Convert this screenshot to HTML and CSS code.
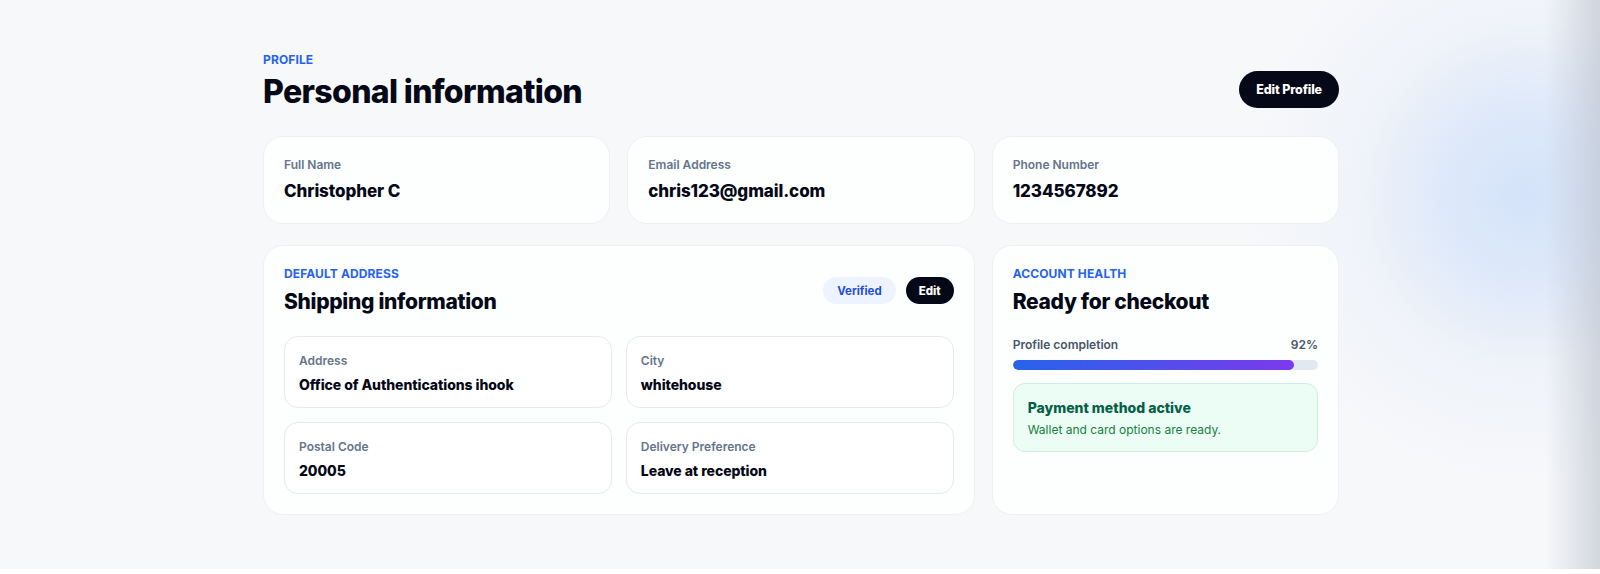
FILE: index.html
```html
<!DOCTYPE html>
<html lang="en">
<head>
  <meta charset="UTF-8">
  <meta name="viewport" content="width=device-width, initial-scale=1.0">
  <title>Profile</title>
  <link rel="stylesheet" href="styles.css">
</head>
<body>

  <div class="page">
    <div class="container">
      <div class="header">
        <div>
          <div class="eyebrow">PROFILE</div>
          <h1 class="title">Personal information</h1>
        </div>
        <button class="btn-dark btn-lg">Edit Profile</button>
      </div>

      <div class="grid">
        <div class="card info">
          <div class="label">Full Name</div>
          <div class="value">Christopher C</div>
        </div>
        <div class="card info">
          <div class="label">Email Address</div>
          <div class="value">chris123@gmail.com</div>
        </div>
        <div class="card info">
          <div class="label">Phone Number</div>
          <div class="value">1234567892</div>
        </div>

        <div class="card section wide">
          <div class="section-head">
            <div>
              <div class="eyebrow">DEFAULT ADDRESS</div>
              <h2 class="section-title">Shipping information</h2>
            </div>
            <div class="actions">
              <span class="pill">Verified</span>
              <button class="btn-dark btn-sm">Edit</button>
            </div>
          </div>
          <div class="fields">
            <div class="field">
              <div class="label">Address</div>
              <div class="field-value">Office of Authentications ihook</div>
            </div>
            <div class="field">
              <div class="label">City</div>
              <div class="field-value">whitehouse</div>
            </div>
            <div class="field">
              <div class="label">Postal Code</div>
              <div class="field-value">20005</div>
            </div>
            <div class="field">
              <div class="label">Delivery Preference</div>
              <div class="field-value">Leave at reception</div>
            </div>
          </div>
        </div>

        <div class="card section">
          <div class="eyebrow">ACCOUNT HEALTH</div>
          <h2 class="section-title">Ready for checkout</h2>
          <div class="progress-row">
            <span>Profile completion</span>
            <span>92%</span>
          </div>
          <div class="track"><div class="bar" style="width: 92%;"></div></div>
          <div class="notice">
            <div class="notice-title">Payment method active</div>
            <div class="notice-text">Wallet and card options are ready.</div>
          </div>
        </div>
      </div>
    </div>
  </div>

</body>
</html>
```

FILE: styles.css
```css
* {
  box-sizing: border-box;
}
body {
  margin: 0;
  background: #fff;
  font-family: Inter, "Noto Sans", Arial, sans-serif;
  color: #050816;
}
.page {
  height: 569px;
  padding-top: 52px;
  background:
    linear-gradient(to right, rgba(185,192,204,0) 1545px, rgba(185,192,204,0.6) 1600px),
    radial-gradient(ellipse 280px 290px at 1525px 195px, rgba(212,227,250,1), rgba(216,229,249,0.8) 30%, rgba(230,237,248,0.45) 60%, rgba(247,248,250,0) 100%),
    #f7f8fa;
}
.container {
  width: 1076px;
  margin-left: 263px;
}
.header {
  display: flex;
  justify-content: space-between;
  align-items: flex-end;
  margin-bottom: 24px;
}
.eyebrow {
  font-size: 12px;
  font-weight: 700;
  color: #2563eb;
  letter-spacing: 0.01em;
}
.title {
  margin: 5px 0 0;
  font-size: 32px;
  font-weight: 800;
  letter-spacing: -0.02em;
  line-height: 40px;
}
.btn-dark {
  border: none;
  background: #050816;
  color: #fff;
  font-family: inherit;
  font-weight: 800;
  border-radius: 999px;
  cursor: pointer;
}
.btn-lg {
  height: 37px;
  padding: 0 17px;
  font-size: 12.5px;
  letter-spacing: -0.01em;
  margin-bottom: 4px;
}
.btn-sm {
  height: 27px;
  padding: 0 13px;
  font-size: 11.5px;
}
.grid {
  display: grid;
  grid-template-columns: repeat(3, 1fr);
  gap: 21px 17px;
}
.card {
  background: #fdfefe;
  border: 1px solid #eef0f4;
  border-radius: 20px;
}
.info {
  height: 88px;
  padding: 20px 20px;
}
.label {
  font-size: 12px;
  font-weight: 600;
  color: #64748b;
}
.value {
  margin-top: 9px;
  font-size: 17px;
  font-weight: 800;
  letter-spacing: -0.005em;
}
.section {
  height: 270px;
  padding: 20px 20px;
}
.wide {
  grid-column: span 2;
}
.section-head {
  display: flex;
  justify-content: space-between;
  align-items: flex-start;
}
.section-title {
  margin: 8px 0 0;
  font-size: 21px;
  font-weight: 800;
  letter-spacing: -0.015em;
}
.actions {
  display: flex;
  gap: 10px;
  margin-top: 11px;
}
.pill {
  display: inline-flex;
  align-items: center;
  height: 27px;
  padding: 0 14px;
  border-radius: 999px;
  background: #eef4ff;
  color: #1d4ed8;
  font-size: 11.5px;
  font-weight: 700;
}
.fields {
  display: grid;
  grid-template-columns: 1fr 1fr;
  gap: 14px;
  margin-top: 22px;
}
.field {
  height: 72px;
  padding: 16px 14px;
  background: #fff;
  border: 1px solid #e6e9ef;
  border-radius: 14px;
}
.field-value {
  margin-top: 8px;
  font-size: 14px;
  font-weight: 800;
  letter-spacing: -0.005em;
}
.progress-row {
  display: flex;
  justify-content: space-between;
  margin-top: 23px;
  font-size: 12px;
  font-weight: 600;
  color: #475569;
}
.track {
  height: 10px;
  margin-top: 8px;
  background: #e2e8f0;
  border-radius: 999px;
  overflow: hidden;
}
.bar {
  height: 100%;
  border-radius: 999px;
  background: linear-gradient(to right, #2563eb, #7c3aed);
}
.notice {
  margin-top: 13px;
  padding: 15px 14px;
  height: 69px;
  background: #ecfdf5;
  border: 1px solid #c9f2de;
  border-radius: 12px;
}
.notice-title {
  font-size: 14px;
  font-weight: 800;
  color: #065f46;
}
.notice-text {
  margin-top: 6px;
  font-size: 12px;
  color: #15803d;
}
```
